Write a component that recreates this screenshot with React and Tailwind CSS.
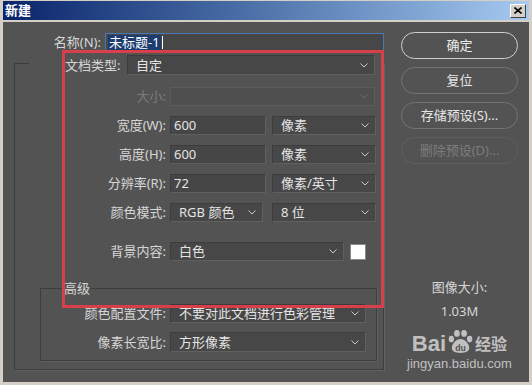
import React from "react";

const Chevron = ({ dim }) => (
  <svg width="8" height="5" viewBox="0 0 8 5" className="shrink-0">
    <path
      d="M0.5 0.5 L4 4 L7.5 0.5"
      fill="none"
      stroke={dim ? "#6c6c6c" : "#c8c8c8"}
      strokeWidth="1"
    />
  </svg>
);

const Select = ({ value, className = "", dim }) => (
  <div
    className={
      "flex items-center justify-between border pl-[8px] pr-[6px] " +
      (dim
        ? "border-[#5c5c5c] bg-[#4f4f4f] "
        : "border-[#3c3c3c] border-b-[#606060] border-r-[#606060] bg-[#474747] text-[#e4e4e4] ") +
      className
    }
  >
    <span className="leading-none">{value}</span>
    <Chevron dim={dim} />
  </div>
);

const Field = ({ value, className = "" }) => (
  <div
    className={
      "flex items-center border border-[#3c3c3c] border-b-[#606060] border-r-[#606060] bg-[#464646] pl-[3px] text-[#e4e4e4] " +
      className
    }
  >
    <span className="leading-none">{value}</span>
  </div>
);

const Label = ({ children, w, dim }) => (
  <div
    className={
      "shrink-0 text-right leading-none " +
      (dim ? "text-[#7b7b7b] " : "text-[#d6d6d6] ") +
      w
    }
  >
    {children}
  </div>
);

const Button = ({ children, def, dim, className = "" }) => (
  <div
    className={
      "flex h-[27px] w-full items-center justify-center rounded-full border " +
      (def
        ? "border-[#cfcfcf] text-[#ececec] "
        : dim
        ? "border-[#5f5f5f] text-[#7c7c7c] "
        : "border-[#747474] text-[#e6e6e6] ") +
      className
    }
  >
    {children}
  </div>
);

const Paw = () => (
  <svg width="27" height="25" viewBox="0 0 34 30" className="mx-[1px] shrink-0">
    <ellipse cx="5.5" cy="12" rx="3.4" ry="4.2" fill="#d4d4d4" />
    <ellipse cx="12.5" cy="4.8" rx="3.6" ry="4.3" fill="#d4d4d4" />
    <ellipse cx="21.5" cy="4.8" rx="3.6" ry="4.3" fill="#d4d4d4" />
    <ellipse cx="28.5" cy="12" rx="3.4" ry="4.2" fill="#d4d4d4" />
    <path
      d="M17 12 C22.5 12 28 18.5 28 23 C28 27.5 23.5 29.5 17 29.5 C10.5 29.5 6 27.5 6 23 C6 18.5 11.5 12 17 12 Z"
      fill="#d4d4d4"
    />
    <text
      x="17"
      y="27"
      textAnchor="middle"
      fontSize="11"
      fontWeight="700"
      fill="#535353"
      fontFamily="Liberation Sans, sans-serif"
    >
      du
    </text>
  </svg>
);

export default function App() {
  return (
    <div className="relative h-[385px] w-[532px] overflow-hidden bg-[#d4d0c8] px-[3px] pt-[1px] pb-[3px] font-['Noto_Sans','Noto_Sans_CJK_SC',sans-serif] text-[13px]">
      {/* title bar */}
      <div className="flex h-[19px] items-center justify-between bg-linear-to-r from-[#0a246a] to-[#a6caf0] pl-[2px] pr-[3px]">
        <span className="text-[13px] font-bold leading-none text-white">新建</span>
        <div className="flex h-[14px] w-[16px] items-center justify-center border border-t-white border-l-white border-b-[#404040] border-r-[#404040] bg-[#d4d0c8]">
          <svg width="8" height="7" viewBox="0 0 8 7">
            <path d="M0.5 0.5 L7.5 6.5 M7.5 0.5 L0.5 6.5" stroke="#000" strokeWidth="1.6" />
          </svg>
        </div>
      </div>

      {/* body */}
      <div className="mt-[2px] flex h-[360px] bg-[#535353]">
        <div className="flex w-[390px] flex-col">
          <div className="mt-[11px] flex h-[19px] items-center">
            <Label w="w-[98px]">名称(N):</Label>
            <div className="ml-[4px] flex h-[19px] w-[279px] items-center border border-[#4a78b0] bg-[#474747] pl-[2px]">
              <span className="bg-[#1d3c72] px-[1px] leading-[15px] text-white">未标题-1</span>
              <span className="ml-[1px] h-[13px] w-px bg-white" />
            </div>
          </div>

          {/* outer group */}
          <div className="mt-[11px] ml-[11px] flex h-[307px] w-[370px] flex-col border-x border-b border-[#3d3d3d] shadow-[1px_1px_0_#616161]">
            <div className="h-px w-[14px] bg-[#3d3d3d]" />
            <div className="-mt-[9px] flex h-[20px] items-center">
              <div className="ml-[50px] w-[62px] leading-none text-[#d6d6d6]">文档类型:</div>
              <Select value="自定" className="h-[20px] w-[248px]" />
            </div>

            <div className="mt-[12px] flex h-[19px] items-center">
              <Label w="w-[151px]" dim>
                大小:
              </Label>
              <Select value="" dim className="ml-[4px] h-[19px] w-[205px]" />
            </div>

            <div className="mt-[10px] flex h-[19px] items-center">
              <Label w="w-[151px]">宽度(W):</Label>
              <Field value="600" className="ml-[4px] h-[19px] w-[96px]" />
              <Select value="像素" className="ml-[6px] h-[19px] w-[104px]" />
            </div>

            <div className="mt-[10px] flex h-[19px] items-center">
              <Label w="w-[151px]">高度(H):</Label>
              <Field value="600" className="ml-[4px] h-[19px] w-[96px]" />
              <Select value="像素" className="ml-[6px] h-[19px] w-[104px]" />
            </div>

            <div className="mt-[10px] flex h-[19px] items-center">
              <Label w="w-[151px]">分辨率(R):</Label>
              <Field value="72" className="ml-[4px] h-[19px] w-[96px]" />
              <Select value="像素/英寸" className="ml-[6px] h-[19px] w-[104px]" />
            </div>

            <div className="mt-[10px] flex h-[19px] items-center">
              <Label w="w-[151px]">颜色模式:</Label>
              <Select value="RGB 颜色" className="ml-[4px] h-[19px] w-[93px]" />
              <Select value="8 位" className="ml-[9px] h-[19px] w-[104px]" />
            </div>

            <div className="mt-[20px] flex h-[19px] items-center">
              <Label w="w-[151px]">背景内容:</Label>
              <Select value="白色" className="ml-[4px] h-[19px] w-[174px]" />
              <div className="ml-[6px] h-[16px] w-[16px] border border-[#8a8a8a] bg-white" />
            </div>

            {/* advanced group */}
            <div className="mt-[27px] ml-[25px] flex h-[73px] w-[337px] flex-col border border-[#3d3d3d] shadow-[1px_1px_0_#616161]">
              <div className="-mt-[9px] ml-[22px] h-[16px] w-fit bg-[#535353] px-px leading-[16px] text-[#d6d6d6]">
                高级
              </div>
              <div className="mt-[8px] flex h-[19px] items-center">
                <Label w="w-[125px]">颜色配置文件:</Label>
                <Select value="不要对此文档进行色彩管理" className="ml-[4px] h-[19px] w-[196px]" />
              </div>
              <div className="mt-[9px] flex h-[20px] items-center">
                <Label w="w-[125px]">像素长宽比:</Label>
                <Select value="方形像素" className="ml-[4px] h-[20px] w-[196px]" />
              </div>
            </div>
          </div>
        </div>

        {/* right column */}
        <div className="ml-[8px] flex w-[117px] flex-col items-center">
          <Button def className="mt-[10px]">
            确定
          </Button>
          <Button className="mt-[8px]">复位</Button>
          <Button className="mt-[8px]">存储预设(S)...</Button>
          <Button dim className="mt-[8px]">
            删除预设(D)...
          </Button>
          <div className="mt-[115px] leading-[16px] text-[#d6d6d6]">图像大小:</div>
          <div className="mt-[8px] leading-[16px] text-[#d6d6d6]">1.03M</div>
        </div>
      </div>

      {/* annotation box */}
      <div className="absolute top-[50px] left-[62px] h-[258px] w-[322px] border-[3px] border-[#d7404b]" />

      {/* watermark */}
      <div className="absolute top-[329px] left-[407px] flex flex-col items-center whitespace-nowrap opacity-85">
        <div className="flex items-end">
          <span className="font-['Liberation_Sans',sans-serif] text-[22px] leading-[20px] font-bold text-[#d4d4d4]">
            Bai
          </span>
          <Paw />
          <span className="text-[16px] leading-[20px] font-bold text-[#d4d4d4]">经验</span>
        </div>
        <span className="mt-[3px] font-['Liberation_Sans',sans-serif] text-[13px] leading-none text-[#d4d4d4]">
          jingyan.baidu.com
        </span>
      </div>
    </div>
  );
}
